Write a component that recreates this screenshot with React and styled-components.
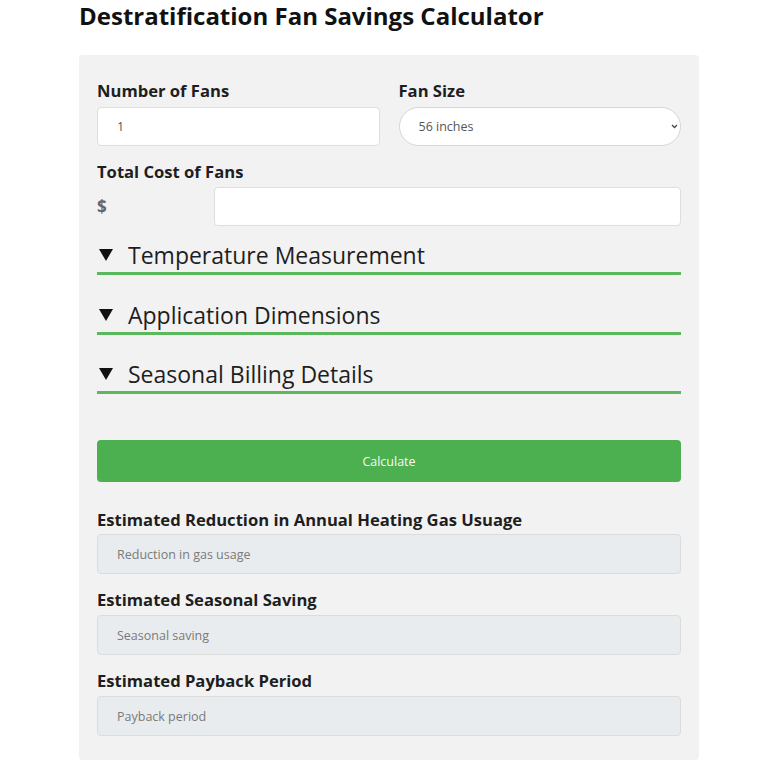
import React from "react";
import styled, { createGlobalStyle } from "styled-components";

const Global = createGlobalStyle`
  html, body { margin: 0; padding: 0; background: #ffffff; }
  body { font-family: "Open Sans", "Liberation Sans", sans-serif; color: #1a1a1a; }
  * { box-sizing: border-box; }
`;

const Page = styled.div`
  padding: 2px 0 0 79px;
  width: 768px;
`;

const Title = styled.h1`
  margin: 0;
  font-size: 24px;
  line-height: 28px;
  font-weight: 700;
  color: #111;
`;

const Panel = styled.div`
  margin-top: 25px;
  width: 620px;
  background: #f2f2f2;
  border-radius: 4px;
  padding: 24px 18px 24px;
  display: flex;
  flex-direction: column;
`;

const Row = styled.div`
  display: grid;
  grid-template-columns: 1fr 1fr;
  column-gap: 19px;
`;

const Field = styled.div`
  display: flex;
  flex-direction: column;
  gap: ${(p) => p.$gap ?? 4}px;
  margin-top: ${(p) => p.$mt ?? 0}px;
`;

const Label = styled.label`
  font-size: 16.6px;
  line-height: 24px;
  font-weight: 700;
  color: #1e1e1e;
`;

const Input = styled.input`
  height: ${(p) => p.$h ?? 39}px;
  width: 100%;
  border: 1px solid ${(p) => (p.readOnly ? "#dcdcdc" : "#dedede")};
  border-radius: 4px;
  background: ${(p) => (p.readOnly ? "#e9ecef" : "#ffffff")};
  padding: 0 19px;
  font-family: "Open Sans", "Liberation Sans", sans-serif;
  font-size: 12.5px;
  color: #555;
  outline: none;
  &::placeholder { color: #7a7a7a; opacity: 1; }
`;

const SelectWrap = styled.div`
  position: relative;
`;

const Select = styled.select`
  appearance: none;
  -webkit-appearance: none;
  width: 100%;
  height: 39px;
  border: 1px solid #d6d6d6;
  border-radius: 20px;
  background: #ffffff;
  padding: 0 19px;
  font-family: "Open Sans", "Liberation Sans", sans-serif;
  font-size: 12.5px;
  color: #555;
  outline: none;
`;

const Chevron = styled.svg`
  position: absolute;
  right: 3px;
  top: 17px;
  pointer-events: none;
`;

const CostRow = styled.div`
  display: flex;
  align-items: center;
`;

const Currency = styled.span`
  width: 20%;
  flex: 0 0 20%;
  font-size: 17px;
  font-weight: 700;
  color: #666;
`;

const Section = styled.div`
  margin-top: ${(p) => p.$mt}px;
  display: flex;
  align-items: center;
  gap: 15px;
  padding: 0 0 2px 2px;
  border-bottom: 3px solid #5cb85c;
  font-size: 23px;
  line-height: 30px;
  color: #1e1e1e;
  cursor: pointer;
`;

const Button = styled.button`
  margin-top: 46px;
  height: 42px;
  width: 100%;
  border: none;
  border-radius: 4px;
  background: #4caf50;
  color: #f4fbf4;
  font-family: "Open Sans", "Liberation Sans", sans-serif;
  font-size: 12.5px;
  cursor: pointer;
`;

const Triangle = () => (
  <svg width="14" height="12" viewBox="0 0 14 12">
    <polygon points="0,0 14,0 7,12" fill="#111" />
  </svg>
);

export default function App() {
  return (
    <>
      <Global />
      <Page>
        <Title>Destratification Fan Savings Calculator</Title>
        <Panel>
          <Row>
            <Field>
              <Label>Number of Fans</Label>
              <Input defaultValue="1" />
            </Field>
            <Field>
              <Label>Fan Size</Label>
              <SelectWrap>
                <Select defaultValue="56">
                  <option value="56">56 inches</option>
                  <option value="72">72 inches</option>
                </Select>
                <Chevron width="7" height="5" viewBox="0 0 8 6">
                  <path d="M1 1.2 L4 4.2 L7 1.2" fill="none" stroke="#444" strokeWidth="1.5" />
                </Chevron>
              </SelectWrap>
            </Field>
          </Row>
          <Field $mt={14} $gap={3}>
            <Label>Total Cost of Fans</Label>
            <CostRow>
              <Currency>$</Currency>
              <Input />
            </CostRow>
          </Field>
          <Section $mt={14}>
            <Triangle />
            <span>Temperature Measurement</span>
          </Section>
          <Section $mt={24.5}>
            <Triangle />
            <span>Application Dimensions</span>
          </Section>
          <Section $mt={24.5}>
            <Triangle />
            <span>Seasonal Billing Details</span>
          </Section>
          <Button>Calculate</Button>
          <Field $mt={26} $gap={2}>
            <Label>Estimated Reduction in Annual Heating Gas Usuage</Label>
            <Input readOnly $h={40} placeholder="Reduction in gas usage" />
          </Field>
          <Field $mt={14} $gap={3}>
            <Label>Estimated Seasonal Saving</Label>
            <Input readOnly $h={40} placeholder="Seasonal saving" />
          </Field>
          <Field $mt={14} $gap={3}>
            <Label>Estimated Payback Period</Label>
            <Input readOnly $h={40} placeholder="Payback period" />
          </Field>
        </Panel>
      </Page>
    </>
  );
}
